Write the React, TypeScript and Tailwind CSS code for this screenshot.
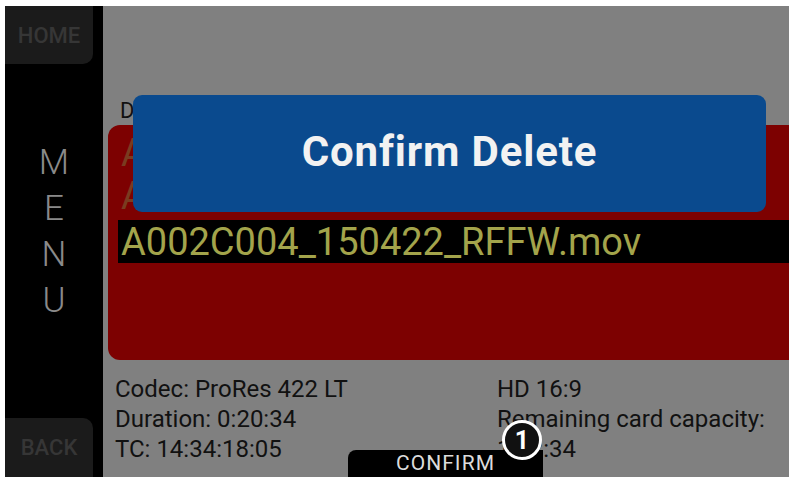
import React from 'react';

const font = { fontFamily: 'Roboto, "Noto Sans", sans-serif' };

const clips = [
    { name: 'A002C002_150422_RFFW.mov', selected: false },
    { name: 'A002C003_150422_RFFW.mov', selected: false },
    { name: 'A002C004_150422_RFFW.mov', selected: true },
];

function SideBar() {
    return (
        <div className="flex w-[98px] shrink-0 flex-col bg-black">
            <div className="flex h-[58px] w-[88px] items-center justify-center rounded-br-[10px] bg-[#1b1b1b] text-[22px] font-medium text-[#363636]">
                HOME
            </div>
            <div className="mt-[76px] flex flex-col items-center text-[35px] font-light leading-[46px] text-[#8a8a8a]">
                <span>M</span>
                <span>E</span>
                <span>N</span>
                <span>U</span>
            </div>
            <div className="mt-auto flex h-[59px] w-[88px] items-center justify-center rounded-tr-[10px] bg-[#1b1b1b] text-[22px] font-medium text-[#363636]">
                BACK
            </div>
        </div>
    );
}

function ClipList() {
    return (
        <div className="ml-[5px] h-[235px] rounded-l-[12px] bg-[#7d0101] pt-[9px]">
            {clips.map((clip) => (
                <div
                    key={clip.name}
                    className={`ml-[10px] flex h-[43px] pl-[3px] text-[38px] leading-none ${
                        clip.selected ? 'items-center bg-black text-[#a3a44b]' : 'items-start text-[#7a3c20]'
                    }`}
                >
                    {clip.name}
                </div>
            ))}
        </div>
    );
}

function ClipInfo() {
    return (
        <div className="mt-[14px] grid grid-cols-[382px_1fr] pl-[12px] text-[24px] leading-[30px] text-[#111]">
            <div className="flex flex-col">
                <span>Codec: ProRes 422 LT</span>
                <span>Duration: 0:20:34</span>
                <span>TC: 14:34:18:05</span>
            </div>
            <div className="flex flex-col">
                <span>HD 16:9</span>
                <span>Remaining card capacity:</span>
                <span>1:12:34</span>
            </div>
        </div>
    );
}

export default function App() {
    return (
        <div className="h-[482px] w-[796px] bg-white pb-[5px] pl-[5px] pr-[7px] pt-[6px]" style={font}>
            <div className="flex h-full w-full">
                <SideBar />
                <div className="relative flex flex-1 flex-col bg-[#808080]">
                    <div className="pl-[17px] pt-[90px] text-[22px] leading-[29px] text-[#111]">Delete Clip</div>
                    <ClipList />
                    <ClipInfo />

                    {/* confirmation dialog over the list */}
                    <div className="absolute left-[30px] top-[89px] flex h-[117px] w-[633px] items-center justify-center rounded-[9px] bg-[#0a4a8e]">
                        <span className="-mt-[4px] text-[42px] font-bold tracking-[0.02em] text-[#f2f2f2]">Confirm Delete</span>
                    </div>

                    {/* softkey at the bottom edge */}
                    <div className="absolute bottom-0 left-[245px] flex h-[27px] w-[195px] items-center justify-center rounded-tl-[8px] bg-black text-[21px] leading-none tracking-[0.05em] text-[#dcdcdc]">
                        CONFIRM
                    </div>

                    {/* numbered callout */}
                    <div className="absolute left-[399px] top-[414px] flex h-[40px] w-[40px] items-center justify-center rounded-full border-[3px] border-white bg-[#111] text-[25px] font-bold leading-none text-white">
                        1
                    </div>
                </div>
            </div>
        </div>
    );
}
